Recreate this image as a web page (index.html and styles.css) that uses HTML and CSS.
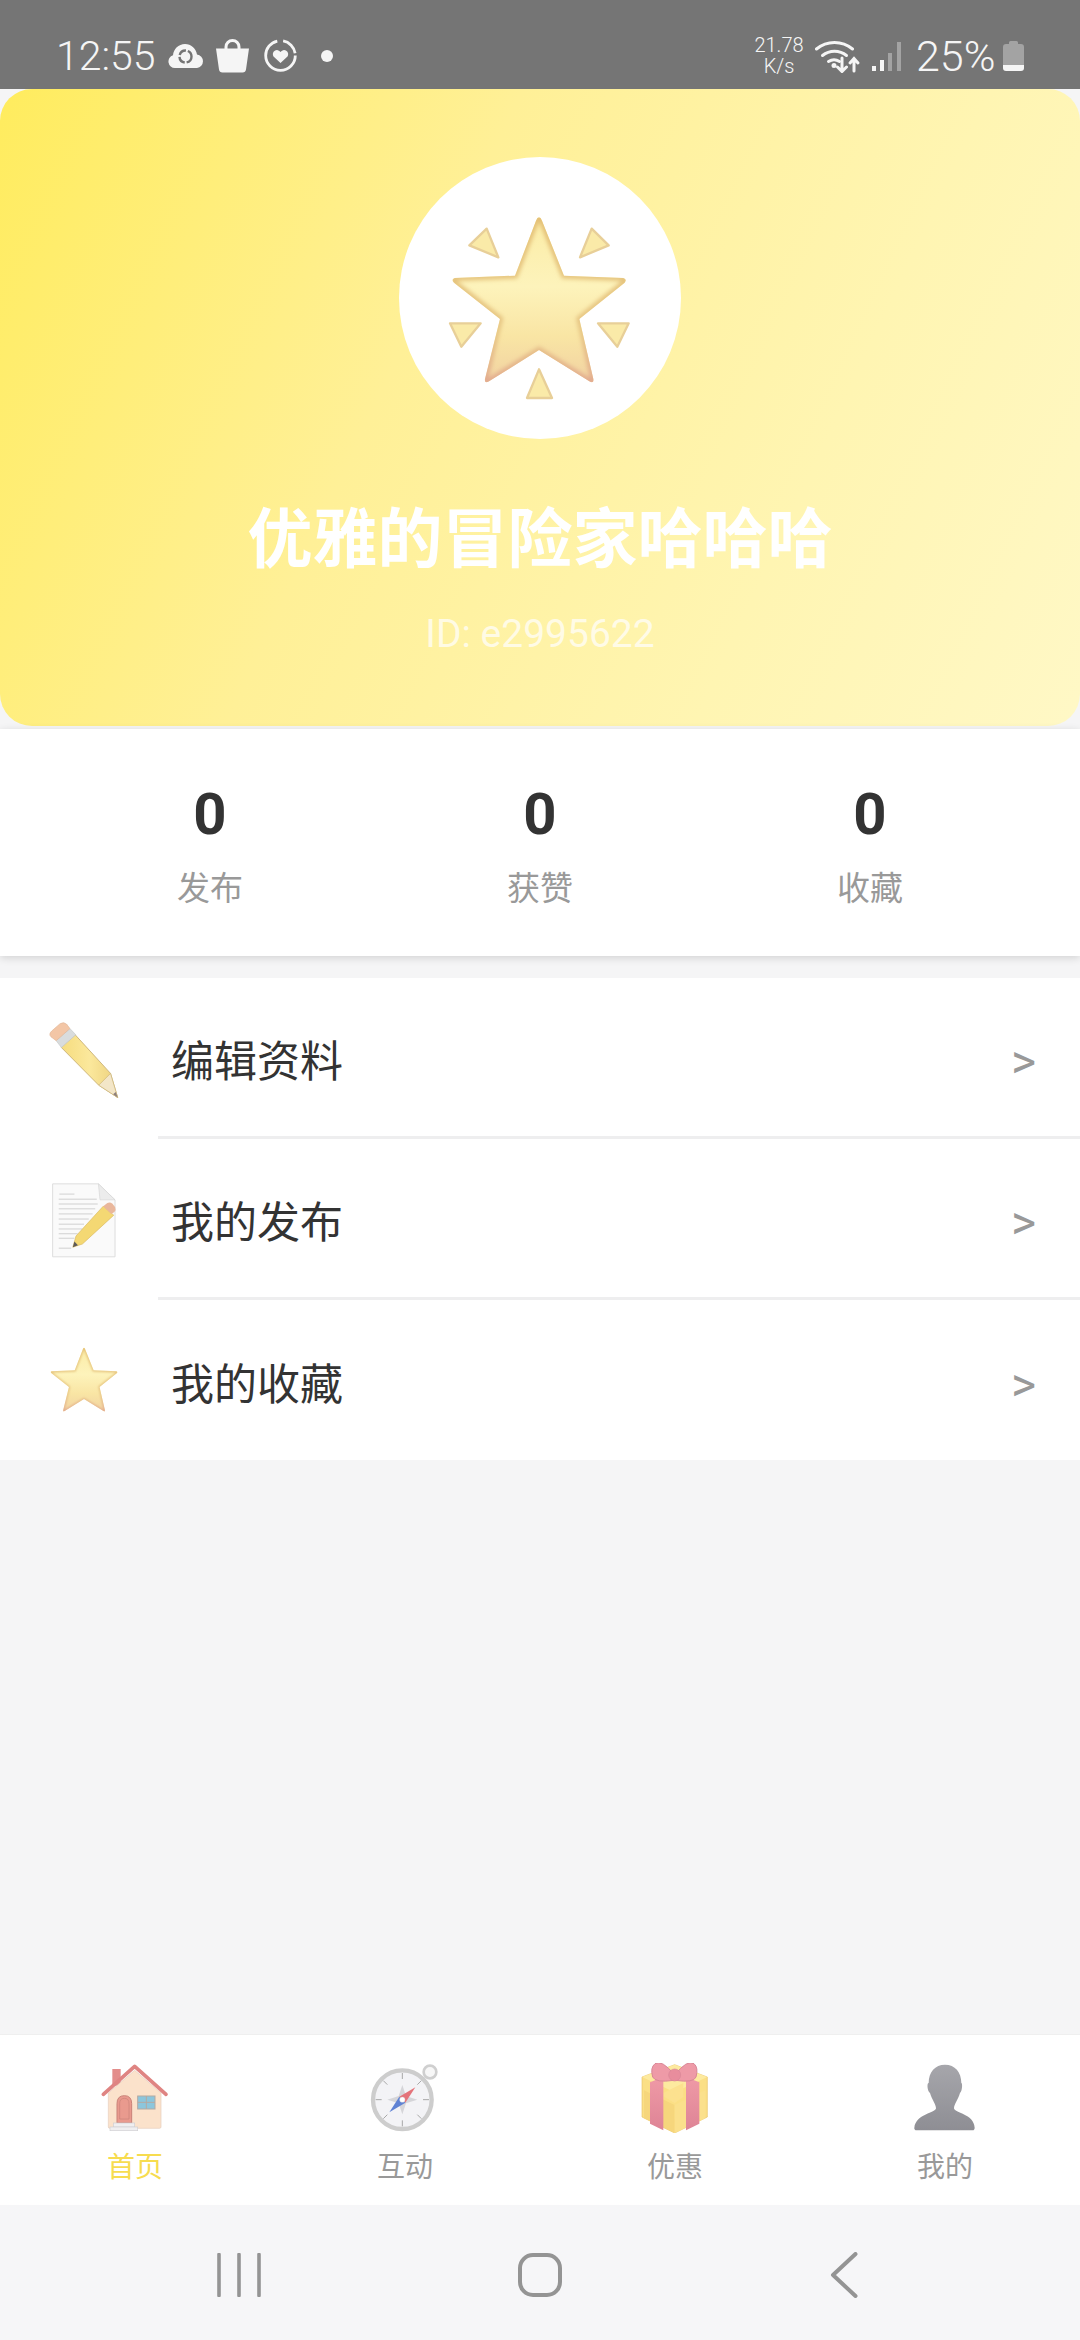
FILE: index.html
```html
<!DOCTYPE html>
<html lang="zh">
<head>
<meta charset="utf-8">
<title>我的</title>
<link rel="stylesheet" href="styles.css">
</head>
<body>
<svg class="defs" width="0" height="0">
  <defs>
    <linearGradient id="starFill" x1="0" y1="0" x2="0" y2="1">
      <stop offset="0" stop-color="#fbeca6"/>
      <stop offset=".42" stop-color="#fdf3bb"/>
      <stop offset=".72" stop-color="#f9e5a4"/>
      <stop offset="1" stop-color="#f1d2a2"/>
    </linearGradient>
    <linearGradient id="starEdge" x1="0" y1="0" x2="0" y2="1">
      <stop offset="0" stop-color="#e3be74"/>
      <stop offset=".7" stop-color="#e6c583"/>
      <stop offset="1" stop-color="#e2a98f"/>
    </linearGradient>
    <linearGradient id="pencilBody" x1="0" y1="0" x2="1" y2="0">
      <stop offset="0" stop-color="#f6dc7e"/>
      <stop offset=".5" stop-color="#fbe89c"/>
      <stop offset="1" stop-color="#ecd07c"/>
    </linearGradient>
    <linearGradient id="giftRibbon" x1="0" y1="0" x2="0" y2="1">
      <stop offset="0" stop-color="#ef9aa6"/>
      <stop offset="1" stop-color="#de8496"/>
    </linearGradient>
    <linearGradient id="personFill" x1="0" y1="0" x2="0" y2="1">
      <stop offset="0" stop-color="#a6a6ab"/>
      <stop offset="1" stop-color="#8e8e94"/>
    </linearGradient>
    <filter id="soft" x="-20%" y="-20%" width="140%" height="140%"><feGaussianBlur stdDeviation="7"/></filter>
    <clipPath id="starClip"><path d="M507 230Q512 230 516 240L582 405 760 412Q772 416 764 426L628 535 670 715Q672 730 658 722L507 628 357 722Q343 730 345 715L390 535 252 426Q242 416 254 412L435 405 498 240Q502 230 507 230Z"/></clipPath>
    <g id="starShape">
      <path fill="url(#starFill)" d="M507 230Q512 230 516 240L582 405 760 412Q772 416 764 426L628 535 670 715Q672 730 658 722L507 628 357 722Q343 730 345 715L390 535 252 426Q242 416 254 412L435 405 498 240Q502 230 507 230Z"/>
      <g clip-path="url(#starClip)">
        <path filter="url(#soft)" fill="none" stroke="url(#starEdge)" stroke-width="18" d="M507 230Q512 230 516 240L582 405 760 412Q772 416 764 426L628 535 670 715Q672 730 658 722L507 628 357 722Q343 730 345 715L390 535 252 426Q242 416 254 412L435 405 498 240Q502 230 507 230Z"/>
      </g>
    </g>
  </defs>
</svg>

<div class="status">
  <div class="status-left">
    <span class="time">12:55</span>
    <svg class="st-cloud" viewBox="0 0 37 24"><path fill="#f5f5f5" d="M8 24a6.500 6.500 0 0 1-2-12.700C6.500 5 11.500 0 18 0c6 0 11 4.500 12 10.500A6.800 6.800 0 0 1 30 24z"/><circle cx="18.500" cy="12.500" r="6" fill="none" stroke="#757575" stroke-width="2.400" stroke-dasharray="8 2"/></svg>
    <svg class="st-bag" viewBox="0 0 33 34"><path fill="none" stroke="#f5f5f5" stroke-width="3" d="M10 11V8a6.500 6.500 0 0 1 13 0v3"/><path fill="#f5f5f5" d="M0 9.500h33l-3 21a3.500 3.500 0 0 1-3.500 3h-20a3.500 3.500 0 0 1-3.500-3z"/></svg>
    <svg class="st-ring" viewBox="0 0 33 33"><circle cx="16.500" cy="16.500" r="14.800" fill="none" stroke="#f5f5f5" stroke-width="2.800" stroke-dasharray="66 6 18 3"/><path fill="#f5f5f5" d="M16.500 24l-7-6.500a4 4 0 0 1 7-4.500 4 4 0 0 1 7 4.500z"/></svg>
    <span class="st-dot"></span>
  </div>
  <div class="status-right">
    <div class="speed"><span>21.78</span><span>K/s</span></div>
    <svg class="st-wifi" viewBox="0 0 46 34"><g fill="none" stroke="#f5f5f5" stroke-width="3" stroke-linecap="round"><path d="M1.500 10a28 28 0 0 1 36 0"/><path d="M7.500 16.500a19 19 0 0 1 24 0"/><path d="M13.500 22.500a10 10 0 0 1 11 0"/><path d="M27 19v13M22.500 28l4.500 4.500 4.500-4.500"/><path d="M39 32V20M35 24l4-4.500 4 4.500"/></g><circle cx="19" cy="26.500" r="2.500" fill="#f5f5f5"/></svg>
    <svg class="st-signal" viewBox="0 0 30 30"><rect x="0" y="25" width="4" height="5" fill="#f5f5f5"/><rect x="8" y="19" width="4" height="11" fill="#f5f5f5"/><rect x="16" y="12" width="4" height="18" fill="#a3a3a3"/><rect x="25" y="1" width="4" height="29" fill="#a3a3a3"/></svg>
    <span class="batt-text">25%</span>
    <svg class="st-batt" viewBox="0 0 21 30"><path fill="#a3a3a3" d="M6 3V1.500A1.500 1.500 0 0 1 7.500 0h6A1.500 1.500 0 0 1 15 1.500V3h3a3 3 0 0 1 3 3v18H0V6a3 3 0 0 1 3-3z"/><path fill="#f5f5f5" d="M0 24h21v3a3 3 0 0 1-3 3H3a3 3 0 0 1-3-3z"/></svg>
  </div>
</div>

<header class="hero">
  <div class="avatar">
    <svg class="avatar-star" viewBox="180 142 660 660">
      <use href="#starShape"/>
      <g fill="#faeaa8" stroke="#e8cf98" stroke-width="7" stroke-linejoin="round">
        <path d="M350 264L385 350 298 314Z"/>
        <path d="M665 264L716 314 630 350Z"/>
        <path d="M240 548H332L274 618Z"/>
        <path d="M684 548H776L742 618Z"/>
        <path d="M507 686L546 772H471Z"/>
      </g>
    </svg>
  </div>
  <h1 class="name">优雅的冒险家哈哈哈</h1>
  <p class="uid">ID: e2995622</p>
</header>

<section class="stats">
  <div class="stat"><span class="stat-num">0</span><span class="stat-label">发布</span></div>
  <div class="stat"><span class="stat-num">0</span><span class="stat-label">获赞</span></div>
  <div class="stat"><span class="stat-num">0</span><span class="stat-label">收藏</span></div>
</section>

<section class="menu">
  <div class="row">
    <svg class="row-icon" viewBox="85 58 220 240">
      <path fill="url(#pencilBody)" stroke="#cdb67a" stroke-width="3" d="M125 142L168 104 276 222 298 296 240 258Z"/>
      <path fill="#f3e6c8" stroke="#cdb67a" stroke-width="2" d="M240 258L276 222 298 296Z"/>
      <path fill="#8d7f7c" d="M284 286L292 279 298 296Z"/>
      <path fill="#d9dcdd" stroke="#c4c8c8" stroke-width="2" d="M110 122L152 85 170 104 126 143Z"/>
      <path fill="#f3c6a6" stroke="#e0b697" stroke-width="2" d="M110 122L152 85 142 72Q134 63 122 70L97 92Q86 102 94 110Z"/>
    </svg>
    <div class="row-body"><span class="row-text">编辑资料</span><span class="row-arrow">&gt;</span></div>
  </div>
  <div class="row">
    <svg class="row-icon" viewBox="85 30 220 250">
      <path fill="#fafafa" stroke="#dcdcdc" stroke-width="3" stroke-linejoin="round" d="M97 42H240L292 92V270H97Z"/>
      <path fill="#ececec" stroke="#d4d4d4" stroke-width="2" d="M240 42L292 92H245Z"/>
      <g stroke="#cfcfcf" stroke-width="3">
        <path d="M118 74H165M116 90H235M116 105H238M116 120H230M116 136H222M116 152H210M116 168H195M116 183H190M116 198H175M116 212H165M116 243H155"/>
      </g>
      <path fill="#f4d873" stroke="#d9b85c" stroke-width="2" d="M255 112L288 140 190 230 160 240 170 205Z"/>
      <path fill="#e9b79c" d="M255 112L268 102Q276 98 284 104L292 114Q296 122 290 130L280 136Z"/>
      <path fill="#5d5a58" d="M160 240L165 222 176 234Z"/>
    </svg>
    <div class="row-body"><span class="row-text">我的发布</span><span class="row-arrow">&gt;</span></div>
  </div>
  <div class="row last">
    <svg class="row-icon" viewBox="227 200 560 560">
      <use href="#starShape"/>
    </svg>
    <div class="row-body"><span class="row-text">我的收藏</span><span class="row-arrow">&gt;</span></div>
  </div>
</section>

<div class="spacer"></div>

<nav class="tabs">
  <div class="tab active">
    <svg class="tab-icon" viewBox="120 70 210 210">
      <rect x="157" y="88" width="25" height="50" fill="#e38d8b"/>
      <path fill="#fbe2cb" stroke="#e6cdbc" stroke-width="2" d="M145 160L224 92 303 160V262Q303 266 298 266H150Q145 266 145 262Z"/>
      <path fill="none" stroke="#df8482" stroke-width="11" stroke-linejoin="round" stroke-linecap="round" d="M130 164L224 80 318 164"/>
      <path fill="#e99a8e" stroke="#c98278" stroke-width="3" d="M171 250V192Q171 168 193 168 215 168 215 192V250Z"/>
      <path fill="none" stroke="#c98278" stroke-width="2" d="M179 192Q179 176 193 176 207 176 207 192V238H179Z"/>
      <rect x="233" y="169" width="52" height="39" fill="#8cc6dc" stroke="#b4a9a2" stroke-width="3"/>
      <path stroke="#b4a9a2" stroke-width="3" d="M259 169V208M233 188H285"/>
      <rect x="160" y="250" width="64" height="12" fill="#f0eff0" stroke="#cfcfd2" stroke-width="2"/>
      <rect x="150" y="262" width="83" height="11" fill="#f0eff0" stroke="#cfcfd2" stroke-width="2"/>
    </svg>
    <span class="tab-label">首页</span>
  </div>
  <div class="tab">
    <svg class="tab-icon" viewBox="930 70 210 210">
      <circle cx="1110" cy="97" r="19" fill="#f7f7f7" stroke="#cfcfcf" stroke-width="8"/>
      <circle cx="1027" cy="180" r="88" fill="#f3f3f6" stroke="#cdcdcd" stroke-width="13"/>
      <g stroke="#a8a8a8" stroke-width="3">
        <path d="M1027 100V118M1027 242V260M947 180H965M1089 180H1107M970 123L982 135M1072 225L1084 237M970 237L982 225M1072 135L1084 123"/>
      </g>
      <path fill="#d5d5d9" d="M1027 136L1038 169 1072 180 1038 191 1027 224 1016 191 982 180 1016 169Z"/>
      <path fill="#e4737a" d="M1066 143L1036 189 1018 171Z"/>
      <path fill="#5f82d4" d="M988 218L1036 189 1018 171Z"/>
      <circle cx="1027" cy="180" r="8" fill="#fff" stroke="#c8c8c8" stroke-width="1"/>
    </svg>
    <span class="tab-label">互动</span>
  </div>
  <div class="tab">
    <svg class="tab-icon" viewBox="120 70 210 210">
      <path fill="#fbdf85" stroke="#e8c46e" stroke-width="2" d="M126 112L224 75 322 112V232L224 280 126 232Z"/>
      <path fill="#f6d67c" d="M132 152L224 196V280L132 236Z"/>
      <path fill="#fbe08c" d="M316 152L224 196V280L316 236Z"/>
      <path fill="#fdea9f" d="M126 112L224 75 322 112 224 158Z"/>
      <path fill="#fce18f" d="M190 160L250 130V172L224 190 190 170Z"/>
      <path fill="url(#giftRibbon)" d="M150 128L190 112V272L150 252Z"/>
      <path fill="url(#giftRibbon)" d="M258 112L298 128V252L258 272Z"/>
      <path fill="#ee9aa7" stroke="#d88797" stroke-width="3" stroke-linejoin="round" d="M224 106Q185 58 165 72 150 84 158 112 166 130 222 122ZM224 106Q262 58 282 72 296 84 288 112 282 130 226 122Z"/>
      <circle cx="224" cy="106" r="18" fill="#e88d9d" stroke="#d88797" stroke-width="2"/>
    </svg>
    <span class="tab-label">优惠</span>
  </div>
  <div class="tab">
    <svg class="tab-icon" viewBox="930 70 210 210">
      <path fill="url(#personFill)" d="M1035 75C1065 75 1084 97 1084 130 1088 130 1087 155 1080 160 1074 180 1062 194 1062 206 1062 220 1122 222 1124 264 1124 268 1122 272 1118 272H950C945 272 942 268 943 264 948 222 1008 220 1008 206 1008 194 996 180 990 160 982 155 980 130 986 130 986 97 1005 75 1035 75Z"/>
    </svg>
    <span class="tab-label">我的</span>
  </div>
</nav>

<footer class="sysnav">
  <svg class="nav-recents" viewBox="0 0 44 44"><path d="M2 1.500V42.500M22 1.500V42.500M42 1.500V42.500" fill="none" stroke="#949494" stroke-width="3.600" stroke-linecap="round"/></svg>
  <svg class="nav-home" viewBox="0 0 44 44"><rect x="2" y="2" width="40" height="40" rx="13" fill="none" stroke="#949494" stroke-width="4"/></svg>
  <svg class="nav-back" viewBox="0 0 28 46"><path d="M25.500 2L3 23 25.500 44" fill="none" stroke="#949494" stroke-width="4" stroke-linecap="round" stroke-linejoin="round"/></svg>
</footer>
</body>
</html>
```
FILE: styles.css
```css
* { box-sizing: border-box; }
html, body { margin: 0; padding: 0; }
body {
  width: 1080px;
  height: 2340px;
  display: flex;
  flex-direction: column;
  background: #f5f5f6;
  font-family: Roboto, "Noto Sans CJK SC", sans-serif;
  overflow: hidden;
}
.defs { position: absolute; }

.status {
  height: 89px;
  flex: none;
  background: #757575;
  color: #f5f5f5;
  display: flex;
  justify-content: space-between;
  align-items: center;
  padding: 24px 56px 0 56px;
}
.status-left, .status-right { display: flex; align-items: center; margin-top: -2px; }
.time { font-size: 41px; font-weight: 300; line-height: 42px; width: 111px; }
.st-cloud { width: 37px; height: 24px; }
.st-bag { width: 33px; height: 34px; margin-left: 12px; }
.st-ring { width: 33px; height: 33px; margin-left: 15px; }
.st-dot { width: 12px; height: 12px; border-radius: 50%; background: #f5f5f5; margin-left: 24px; }
.speed {
  display: flex;
  flex-direction: column;
  align-items: center;
  font-size: 20px;
  font-weight: 300;
  line-height: 21px;
  width: 52px;
}
.st-wifi { width: 46px; height: 34px; margin-left: 10px; }
.st-signal { width: 30px; height: 30px; margin-left: 11px; }
.batt-text { font-size: 43px; font-weight: 300; line-height: 44px; margin-left: 14px; width: 87px; }
.st-batt { width: 21px; height: 30px; }

.hero {
  height: 637px;
  flex: none;
  border-radius: 32px;
  background: linear-gradient(115deg, #ffec5e 0%, #fff097 38%, #fff5b2 72%, #fff8c6 100%);
  display: flex;
  flex-direction: column;
  align-items: center;
  padding-top: 68px;
}
.avatar {
  width: 282px;
  height: 282px;
  border-radius: 50%;
  background: #fff;
  display: flex;
  align-items: center;
  justify-content: center;
}
.avatar-star { width: 220px; height: 220px; }
.name {
  margin: 58px 0 0;
  font-size: 65px;
  line-height: 86px;
  font-weight: 700;
  color: #fff;
}
.uid {
  margin: 29px 0 0;
  font-size: 39px;
  line-height: 44px;
  color: rgba(255, 255, 255, .72);
}

.stats {
  margin-top: 3px;
  height: 227px;
  flex: none;
  background: #fff;
  display: flex;
  padding: 0 45px;
  box-shadow: 0 2px 8px rgba(0, 0, 0, .14);
}
.stat {
  flex: 1;
  display: flex;
  flex-direction: column;
  align-items: center;
  padding-top: 51px;
}
.stat-num { font-size: 58px; line-height: 68px; font-weight: 700; color: #333; }
.stat-label { margin-top: 22px; font-size: 33px; line-height: 38px; color: #999; }

.menu { margin-top: 22px; flex: none; background: #fff; }
.row { height: 161px; display: flex; align-items: center; padding-left: 48px; }
.row.last { height: 160px; }
.row-icon { width: 72px; height: 80px; flex: none; margin-right: 38px; }
.row-body {
  flex: 1;
  height: 100%;
  display: flex;
  align-items: center;
  justify-content: space-between;
  padding: 9px 44px 0 13px;
  border-bottom: 3px solid #eeeeef;
}
.row.last .row-body { border-bottom: none; }
.row-text { font-size: 43px; line-height: 56px; color: #333; }
.row-arrow { font-size: 48px; line-height: 56px; color: #999; }

.spacer { flex: 1; }

.tabs {
  height: 171px;
  flex: none;
  background: #fff;
  border-top: 1px solid #efefef;
  display: flex;
}
.tab {
  flex: 1;
  display: flex;
  flex-direction: column;
  align-items: center;
  padding-top: 28px;
}
.tab-icon { width: 70px; height: 70px; }
.tab-label { margin-top: 16px; font-size: 28px; line-height: 38px; color: #999; }
.tab.active .tab-label { color: #f7dc4f; }

.sysnav {
  height: 135px;
  flex: none;
  background: #f6f6f8;
  display: flex;
  align-items: center;
  padding: 4px 222px 0 217px;
  justify-content: space-between;
}
.nav-recents { width: 44px; height: 44px; }
.nav-home { width: 44px; height: 44px; margin-right: 11px; }
.nav-back { width: 28px; height: 46px; }
```
